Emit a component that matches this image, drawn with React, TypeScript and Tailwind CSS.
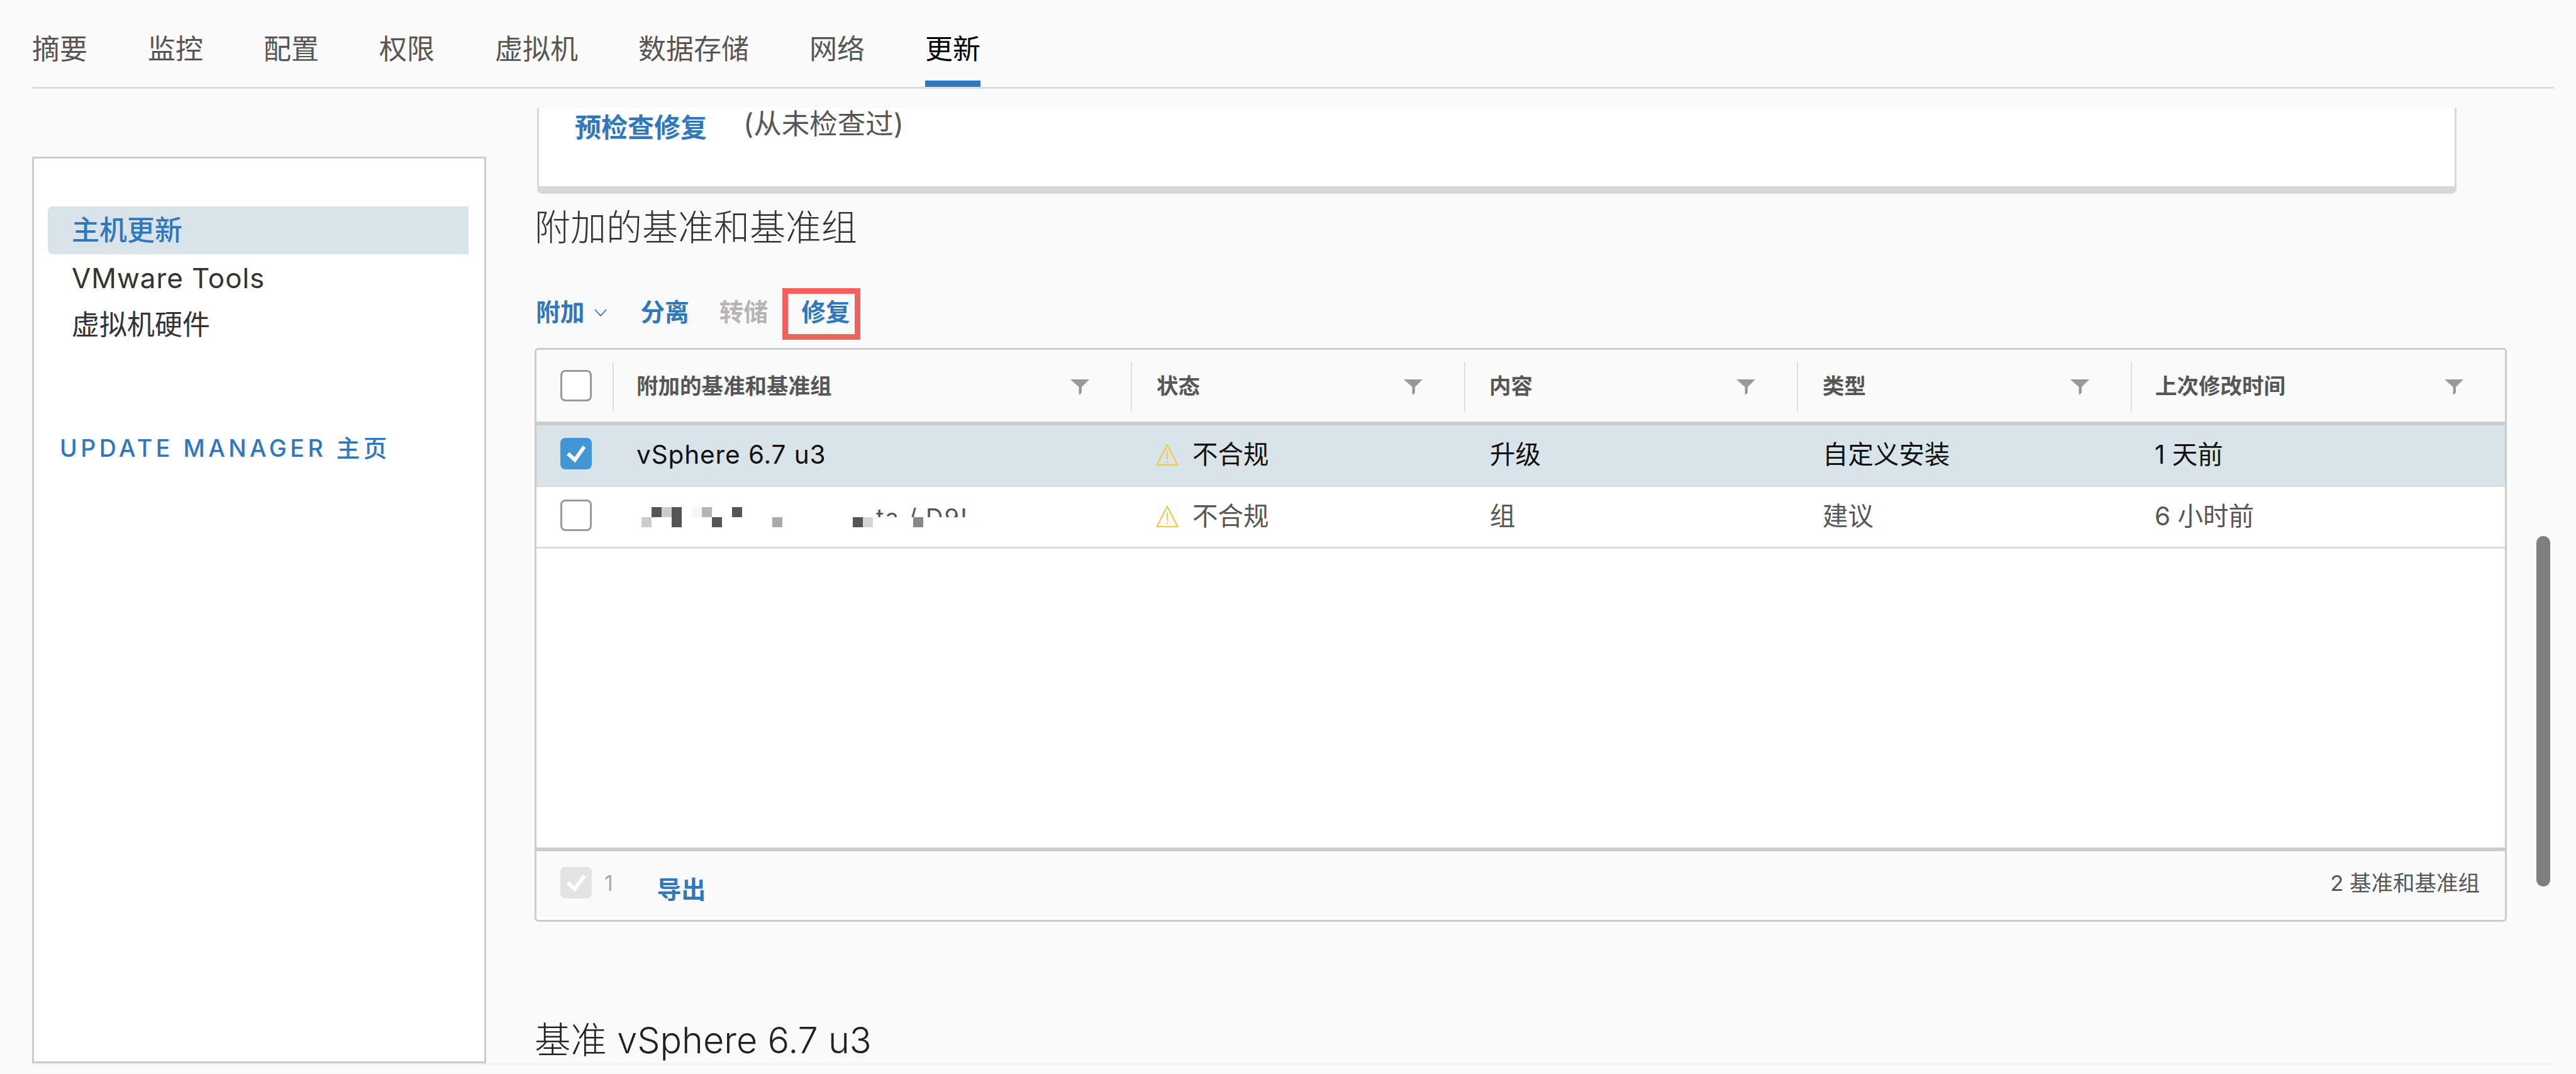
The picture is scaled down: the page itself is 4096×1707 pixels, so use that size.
import type { ReactNode } from "react";

const tabs = ["摘要", "监控", "配置", "权限", "虚拟机", "数据存储", "网络"];

const columns = [
  { title: "附加的基准和基准组", className: "w-[824px] pl-[36px]" },
  { title: "状态", className: "w-[530px] pl-[39px]" },
  { title: "内容", className: "w-[529px] pl-[38px]" },
  { title: "类型", className: "w-[531px] pl-[39px]" },
  { title: "上次修改时间", className: "w-[595px] pl-[37px]" },
];

// mosaic covering the redacted baseline name: [col, row, colour]
const mosaic: [number, number, string][] = [
  [1, 0, "#555555"], [2, 0, "#cccccc"], [3, 0, "#555555"], [5, 0, "#f5f5f5"], [6, 0, "#b5b5b5"], [9, 0, "#555555"],
  [0, 1, "#cccccc"], [3, 1, "#555555"], [7, 1, "#555555"], [13, 1, "#aaaaaa"], [21, 1, "#555555"], [22, 1, "#d4d4d4"], [27, 1, "#888888"],
];

function CheckMark() {
  return (
    <svg viewBox="0 0 50 50" className="h-full w-full">
      <path d="M12 25 L23 35 L38 14" fill="none" stroke="#ffffff" strokeWidth="6" />
    </svg>
  );
}

function Checkbox({ checked = false }: { checked?: boolean }) {
  if (checked) {
    return (
      <div className="h-[50px] w-[50px] rounded-[8px] bg-[#4296d6]">
        <CheckMark />
      </div>
    );
  }
  return <div className="h-[50px] w-[50px] rounded-[8px] border-[3px] border-[#9a9a9a] bg-white" />;
}

function FilterIcon() {
  return (
    <svg viewBox="0 0 30 24" className="mt-[2px] h-[24px] w-[30px] shrink-0">
      <path d="M0 0 H30 L18 12 V21 L15 24 H13.5 V12 Z" fill="#999999" />
    </svg>
  );
}

function WarningIcon() {
  return (
    <svg viewBox="0 0 36 36" className="h-[36px] w-[36px] shrink-0">
      <path d="M18 2 L34.5 34 H1.5 Z" fill="none" stroke="#f5c842" strokeWidth="2.2" strokeLinejoin="round" />
      <path d="M18 12 V25" stroke="#f5c842" strokeWidth="2" />
      <path d="M18 27.5 V30" stroke="#f5c842" strokeWidth="2.2" />
    </svg>
  );
}

function Status() {
  return (
    <div className="flex items-center gap-[22px]">
      <WarningIcon />
      <span>不合规</span>
    </div>
  );
}

function Row({ name, content, type, time, selected }: { name: ReactNode; content: string; type: string; time: string; selected?: boolean }) {
  return (
    <div className={`flex h-[98px] items-center border-b-[3px] border-[#dddddd] pb-[2px] ${selected ? "bg-[#d9e4ea] text-[#111111]" : "bg-white text-[#565656]"}`}>
      <div className="mb-[4px] flex w-[121px] justify-center pl-[4px]">
        <Checkbox checked={selected} />
      </div>
      <div className="flex w-[824px] pl-[38px]">{name}</div>
      <div className="w-[530px] pl-[40px]"><Status /></div>
      <div className="w-[529px] pl-[41px]">{content}</div>
      <div className="w-[531px] pl-[41px]">{type}</div>
      <div className="w-[595px] pl-[38px]">{time}</div>
    </div>
  );
}

function RedactedName() {
  return (
    <div className="relative ml-[8px] mt-[2px] h-[32px] w-[460px]">
      <svg viewBox="0 0 448 32" className="h-[32px] w-[448px]">
        {mosaic.map(([col, row, color]) => (
          <rect key={`${col}-${row}`} x={col * 16} y={row * 16} width="16" height="16" fill={color} />
        ))}
      </svg>
      <div className="absolute left-[373px] top-0 h-[16px] w-[160px] overflow-hidden whitespace-nowrap text-[38px] leading-[33px] tracking-[2px] text-[#555555]">
        ta / D9!
      </div>
    </div>
  );
}

export default function App() {
  return (
    <div className="relative h-[1707px] w-[4096px] overflow-hidden bg-[#fafafa] font-['Inter','Noto_Sans_CJK_SC',sans-serif]">
      <nav className="ml-[51px] flex h-[141px] w-[4010px] gap-[96px] border-b-[3px] border-[#dcdcdc] text-[44px] text-[#565656]">
        {tabs.map((t) => (
          <div key={t} className="pt-[50px] leading-[56px]">{t}</div>
        ))}
        <div className="h-[138px] border-b-[10px] border-[#2f78bd] pt-[50px] leading-[56px] text-black">更新</div>
      </nav>

      <div className="flex">
        <aside className="ml-[51px] mt-[108px] h-[1441px] w-[722px] border-[3px] border-[#cccccc] bg-white pl-[22px] pt-[76px] text-[44px] text-[#333333]">
          <div className="flex h-[76px] w-[669px] items-center rounded-l-[8px] bg-[#d9e4ea] pl-[38px] font-medium text-[#2f78bd]">主机更新</div>
          <div className="flex h-[75px] items-center pl-[38px] tracking-[0.9px]">VMware Tools</div>
          <div className="flex h-[74px] items-center pl-[38px]">虚拟机硬件</div>
          <div className="mt-[132px] pl-[19px] text-[37.5px] font-medium tracking-[5.5px] text-[#2f78bd]">UPDATE MANAGER 主页</div>
        </aside>

        <main className="ml-[77px] w-[3136px]">
          <section className="ml-[4px] mt-[31px] h-[136px] w-[3052px] rounded-b-[8px] border-x-[3px] border-b-[12px] border-[#d7d7d7] bg-white pl-[57px]">
            <div className="flex items-start gap-[58px]">
              <a className="mt-[8px] text-[42px] font-bold leading-[46px] text-[#2f78bd]">预检查修复</a>
              <span className="mt-[2px] text-[44.5px] leading-[46px] text-[#565656]">(从未检查过)</span>
            </div>
          </section>

          <h2 className="mt-[19px] text-[57px] font-light leading-[70px] text-[#333333]">附加的基准和基准组</h2>

          <div className="mt-[61px] flex h-[82px] items-center pl-[2px] text-[38.7px] font-bold text-[#2f78bd]">
            <a className="mb-[5px]">附加</a>
            <svg viewBox="0 0 20 12" className="mb-[5px] ml-[16px] h-[12px] w-[20px]">
              <path d="M1 1 L10 11 L19 1" fill="none" stroke="#2f78bd" strokeWidth="1.8" />
            </svg>
            <a className="mb-[5px] ml-[53px]">分离</a>
            <a className="mb-[5px] ml-[48px] text-[#b5b5b5]">转储</a>
            <div className="ml-[23px] flex h-[82px] w-[124px] items-center border-[9px] border-[#f0625a] pb-[5px] pl-[21px]">修复</div>
          </div>

          <div className="mt-[13px] h-[912px] w-[3136px] overflow-hidden rounded-[6px] border-[3px] border-[#cccccc] bg-white">
            <div className="flex h-[120px] items-start border-b-[6px] border-[#cccccc] bg-[#fafafa] pt-[19px] text-[34.5px] font-bold text-[#565656]">
              <div className="mt-[13px] flex w-[121px] justify-center pl-[4px]"><Checkbox /></div>
              {columns.map((c) => (
                <div key={c.title} className={`flex h-[79px] items-center justify-between border-l-[2px] border-[#dddddd] pb-[2px] pr-[66px] ${c.className}`}>
                  <span>{c.title}</span>
                  <FilterIcon />
                </div>
              ))}
            </div>

            <div className="text-[40.5px] leading-[50px]">
              <Row selected name={<span className="tracking-[0.9px]">vSphere 6.7 u3</span>} content="升级" type="自定义安装" time="1 天前" />
              <Row name={<RedactedName />} content="组" type="建议" time="6 小时前" />
            </div>

            <div className="h-[475px] bg-white" />

            <div className="flex h-[111px] items-start border-t-[6px] border-[#cccccc] bg-[#fafafa] pl-[38px] pr-[40px]">
              <div className="mt-[25px] h-[50px] w-[50px] rounded-[8px] bg-[#e3e3e3]">
                <CheckMark />
              </div>
              <span className="ml-[20px] mt-[31px] text-[34px] leading-[40px] text-[#aaaaaa]">1</span>
              <a className="ml-[70px] mt-[38px] text-[38.7px] font-bold leading-[46px] text-[#2f78bd]">导出</a>
              <span className="ml-auto mt-[29px] text-[34.5px] leading-[44px] text-[#565656]">2 基准和基准组</span>
            </div>
          </div>

          <h2 className="mt-[153px] text-[57.5px] font-light leading-[70px] text-[#222222]">基准 vSphere 6.7 u3</h2>
        </main>
      </div>

      <div className="absolute left-[51px] top-[1690px] h-[3px] w-[4010px] bg-[#f3f3f3]" />
      <div className="absolute left-[4033px] top-[852px] h-[557px] w-[22px] rounded-[11px] bg-[#7f7f7f]" />
    </div>
  );
}
